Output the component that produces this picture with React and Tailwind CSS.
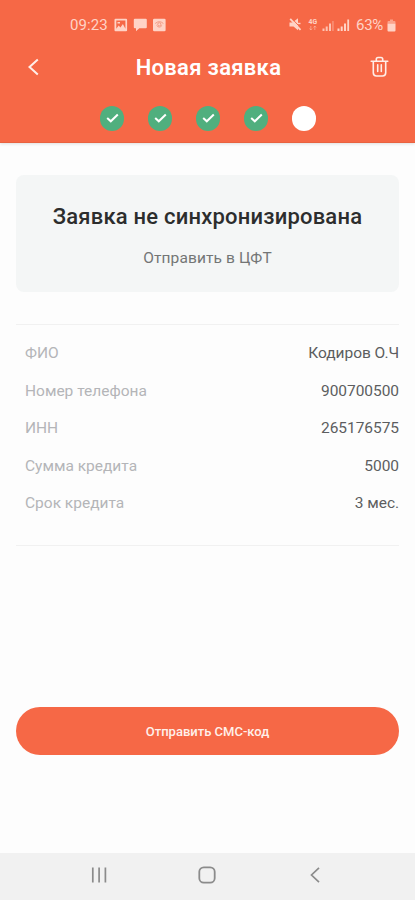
const steps = [true, true, true, true, false];

const details = [
  { label: "ФИО", value: "Кодиров О.Ч" },
  { label: "Номер телефона", value: "900700500" },
  { label: "ИНН", value: "265176575" },
  { label: "Сумма кредита", value: "5000" },
  { label: "Срок кредита", value: "3 мес." },
];

function StatusBar() {
  return (
    <div className="flex h-[50px] items-center justify-between pl-[70px] pr-[19px] text-[#ffd3c6]">
      <div className="flex items-center">
        <span className="w-[44px] text-[15px] leading-none tracking-[0.1px]">09:23</span>
        <svg width="54" height="14" viewBox="0 0 54 14" fill="currentColor">
          <path fillRule="evenodd" d="M1.500.7h10.600q1 0 1 1v10.600q0 1-1 1h-10.600q-1 0-1-1V1.700q0-1 1-1zM2.300 2.500v8.300l2.400-3.200 1.700 1.900 2.500-3.400 2.500 4.700V2.500zM3.500 4h2.500v1.500H3.500z" />
          <path d="M20.800.8h11q1 0 1 1v7.500q0 1-1 1h-6.500l-3.300 3v-3h-1.200q-1 0-1-1V1.800q0-1 1-1z" />
          <rect x="39" y="0.700" width="12.600" height="12.600" rx="1.200" />
          <g fill="none" stroke="#f29a83" strokeWidth="1">
            <path d="M41.200 5.500q4.100-3.600 8.200 0M42.500 7.300q2.800 3.600 5.600 0" />
            <circle cx="45.300" cy="6.300" r="1.600" />
          </g>
        </svg>
      </div>
      <div className="flex items-center">
        <svg width="67" height="16" viewBox="0 0 67 16" fill="currentColor">
          <path d="M.5 5.500h3L9 1.200v12L4.500 9.500h-4z" />
          <path d="M2.200.8l10 10.600" stroke="#f66846" strokeWidth="1" />
          <path d="M1.200 1.800l10.300 11" stroke="currentColor" strokeWidth="1.800" />
          <path d="M9 6.500h2.500" stroke="currentColor" strokeWidth="1.400" />
          <text x="19.500" y="6.500" fontSize="6.800" fontWeight="700">4G</text>
          <path d="M21.800 13V9m-1.300 2.500 1.300 1.500 1.300-1.500M25.800 13V9m-1.300 1.500L25.800 9l1.300 1.500" fill="none" stroke="currentColor" strokeWidth=".8" opacity=".6" />
          <path d="M33.500 11.500h2V14h-2zM36.700 9.500h2V14h-2zM40 6.500h2V14h-2z" opacity=".85" />
          <path d="M43.200 4h1.500v10h-1.500z" opacity=".4" />
          <path d="M48.500 11.500h2V14h-2zM51.700 9.500h2V14h-2zM55 6.500h2V14h-2zM58.300 2.500h1.800V14h-1.800z" />
        </svg>
        <span className="w-[31px] text-[15px] leading-none tracking-[-0.3px]">63%</span>
        <svg width="9" height="13" viewBox="0 0 9 13" fill="currentColor">
          <path d="M3 .5h3v1.500h1.500q1 0 1 1v1.500h-8V3q0-1 1-1H3z" opacity=".55" />
          <path d="M.5 4.500h8v7q0 1-1 1h-6q-1 0-1-1z" />
        </svg>
      </div>
    </div>
  );
}

function Header() {
  return (
    <header className="h-[143px] border-b border-[#e9623f] bg-[#f66846] shadow-[0_1px_3px_rgba(0,0,0,0.12)]">
      <StatusBar />
      <div className="flex h-[34px] items-center justify-between pl-[27px] pr-[25px] text-white">
        <button type="button" className="w-[20px]">
          <svg width="13" height="18" viewBox="0 0 13 18" fill="none" stroke="#ffeee8" strokeWidth="2">
            <path d="M10.800 1.500 2.500 9l8.300 7.500" />
          </svg>
        </button>
        <h1 className="pt-[2px] text-[22px] font-semibold leading-none tracking-[0.3px]">Новая заявка</h1>
        <button type="button" className="w-[20px]">
          <svg
            width="20"
            height="22"
            viewBox="0 0 20 22"
            fill="none"
            stroke="#ffeee8"
            strokeWidth="1.600"
            strokeLinecap="round"
            strokeLinejoin="round"
          >
            <path d="M1.200 5.200h16.600M6.300 5V3.200q0-1.700 1.700-1.700h3q1.700 0 1.700 1.700V5M3.300 5.500v11.300q0 3.200 3.200 3.200h6q3.200 0 3.200-3.200V5.500M7.700 8.700v6.800M11.300 8.700v6.800" />
          </svg>
        </button>
      </div>
      <div className="flex justify-center pl-px pt-[22px]">
        <div className="flex gap-[23.500px]">
          {steps.map((done, i) => (
            <span
              key={i}
              className={`flex size-[24.500px] items-center justify-center rounded-full ${
                done ? "bg-[#50af7e]" : "bg-white"
              }`}
            >
              {done && (
                <svg width="13" height="10" viewBox="0 0 13 10" fill="none" stroke="white" strokeWidth="2">
                  <path d="M1.200 5 4.800 8.300 11.800 1.500" />
                </svg>
              )}
            </span>
          ))}
        </div>
      </div>
    </header>
  );
}

function NavBar() {
  return (
    <nav className="flex h-[47px] items-center bg-[#f1f1f1] pl-[91px] pr-[95px] pb-[3px] text-[#8b8b8b]">
      <div className="flex w-full items-center">
        <svg width="16" height="16" viewBox="0 0 16 16" stroke="currentColor" strokeWidth="1.700">
          <path d="M1.800.5v15M8.100.5v15M14.400.5v15" />
        </svg>
        <svg className="ml-[91px]" width="18" height="18" viewBox="0 0 18 18" fill="none" stroke="currentColor" strokeWidth="1.800">
          <rect x="1.300" y="1.300" width="15.400" height="15.400" rx="4.500" />
        </svg>
        <svg className="ml-auto" width="10" height="16" viewBox="0 0 10 16" fill="none" stroke="currentColor" strokeWidth="1.700">
          <path d="M9 .8 1.500 8 9 15.200" />
        </svg>
      </div>
    </nav>
  );
}

export default function App() {
  return (
    <div className="flex h-[900px] w-full flex-col overflow-hidden bg-[#fdfdfd] font-[Roboto,sans-serif]">
      <Header />
      <main className="flex flex-1 flex-col px-4">
        <section className="mt-[32px] flex h-[117px] flex-col items-center rounded-lg bg-[#f4f6f6] pt-[29px]">
          <h2 className="text-[22px] font-medium leading-[26px] tracking-[0.2px] text-[#2c2d2d]">
            Заявка не синхронизирована
          </h2>
          <p className="mt-[18px] text-[15.500px] leading-[20px] tracking-[0.1px] text-[#737575]">
            Отправить в ЦФТ
          </p>
        </section>

        <dl className="mt-[32px] h-[222px] border-y border-[#f1f1f1] pl-[9px] pt-[10px]">
          {details.map(({ label, value }) => (
            <div key={label} className="flex h-[37.500px] items-center justify-between text-[15.500px]">
              <dt className="text-[#b4b5b8]">{label}</dt>
              <dd className="tracking-[-0.050px] text-[#5c5d5f]">{value}</dd>
            </div>
          ))}
        </dl>

        <button
          type="button"
          className="mt-[161px] h-[48px] rounded-full bg-[#f66846] pt-px text-[13px] font-medium text-[#fff0ea]"
        >
          Отправить СМС-код
        </button>
      </main>
      <NavBar />
    </div>
  );
}
